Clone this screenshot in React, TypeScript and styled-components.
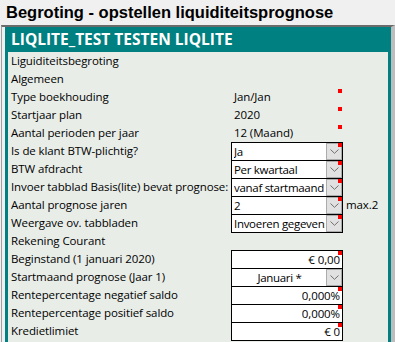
import React from 'react'
import styled, { createGlobalStyle } from 'styled-components'

const GlobalStyle = createGlobalStyle`
  html, body {
    margin: 0;
    padding: 0;
    background: #f0f0f0;
    overflow: hidden;
  }
`

const Page = styled.div`
  width: 395px;
  height: 342px;
  overflow: hidden;
  background: #f0f0f0;
`

const Title = styled.h1`
  margin: 0;
  height: 25px;
  padding-left: 6px;
  font-family: 'Liberation Sans', Arial, sans-serif;
  font-size: 16.5px;
  font-weight: bold;
  line-height: 25px;
  color: #000;
  white-space: nowrap;
`

const Frame = styled.div`
  margin-left: 1px;
  padding-left: 3px;
  border-top: 2px solid #6b6b6b;
  border-left: 1px solid #a0a0a0;
  border-right: 4px solid #bdbdbd;
  height: 320px;
`

const Sheet = styled.div`
  background: #008080;
  padding: 0 3px;
  height: 100%;
`

const SheetHeader = styled.div`
  height: 25px;
  padding-left: 3px;
  font-family: 'Open Sans', sans-serif;
  font-size: 15.5px;
  font-weight: bold;
  line-height: 25px;
  color: #fff;
  white-space: nowrap;
`

const Body = styled.div`
  background: #e8ede8;
  padding-left: 3px;
  height: 300px;
  font-family: 'Open Sans', sans-serif;
  font-size: 11.5px;
  letter-spacing: -0.1px;
  color: #000;
`

const Row = styled.div`
  display: grid;
  grid-template-columns: 220px 112px auto;
  height: 18px;
  line-height: 18px;
  white-space: nowrap;
`

const Label = styled.div`
  overflow: visible;
`

const Cell = styled.div<{ $boxed?: boolean; $align?: 'left' | 'right' | 'center' }>`
  position: relative;
  box-sizing: border-box;
  height: ${p => (p.$boxed ? '19px' : '18px')};
  line-height: 17px;
  padding: ${p => (p.$boxed ? '0 2px 0 2px' : '0 3px')};
  background: ${p => (p.$boxed ? '#fff' : 'transparent')};
  border: ${p => (p.$boxed ? '1px solid #000' : 'none')};
  text-align: ${p => p.$align || 'left'};
  overflow: hidden;
`

const SelectText = styled.div<{ $center?: boolean }>`
  margin-right: 15px;
  overflow: hidden;
  letter-spacing: -0.3px;
  text-align: ${p => (p.$center ? 'center' : 'left')};
`

const DropButton = styled.div`
  position: absolute;
  top: 0;
  right: 0;
  bottom: 0;
  width: 16px;
  box-sizing: border-box;
  background: #e1e1e1;
  border: 1px solid #acacac;
  display: flex;
  align-items: center;
  justify-content: center;
`

const Marker = styled.span<{ $plain?: boolean }>`
  position: absolute;
  top: ${p => (p.$plain ? '1px' : '0')};
  right: ${p => (p.$plain ? '1px' : '0')};
  width: 4px;
  height: 4px;
  background: #ff0000;
`

const Note = styled.div`
  padding-left: 3px;
  line-height: 17px;
`

const Chevron = () => (
  <svg width="9" height="5" viewBox="0 0 9 5">
    <path d="M0.5 0.5 L4.5 4.3 L8.5 0.5" fill="none" stroke="#707070" strokeWidth="1" />
  </svg>
)

type Value =
  | { kind: 'none' }
  | { kind: 'text'; text: string; marker?: boolean }
  | { kind: 'select'; text: string; marker?: boolean; center?: boolean }
  | { kind: 'input'; text: string; marker?: boolean }

const rows: { label: string; value: Value; note?: string }[] = [
  { label: 'Liguiditeitsbegroting', value: { kind: 'none' } },
  { label: 'Algemeen', value: { kind: 'none' } },
  { label: 'Type boekhouding', value: { kind: 'text', text: 'Jan/Jan', marker: true } },
  { label: 'Startjaar plan', value: { kind: 'text', text: '2020', marker: true } },
  { label: 'Aantal perioden per jaar', value: { kind: 'text', text: '12 (Maand)', marker: true } },
  { label: 'Is de klant BTW-plichtig?', value: { kind: 'select', text: 'Ja', marker: true } },
  { label: 'BTW afdracht', value: { kind: 'select', text: 'Per kwartaal', marker: true } },
  {
    label: 'Invoer tabblad Basis(lite) bevat prognose:',
    value: { kind: 'select', text: 'vanaf startmaand', marker: true },
  },
  { label: 'Aantal prognose jaren', value: { kind: 'select', text: '2', marker: true }, note: 'max.2' },
  { label: 'Weergave ov. tabbladen', value: { kind: 'select', text: 'Invoeren gegevens', marker: true } },
  { label: 'Rekening Courant', value: { kind: 'none' } },
  { label: 'Beginstand (1 januari 2020)', value: { kind: 'input', text: '€ 0,00', marker: true } },
  { label: 'Startmaand prognose (Jaar 1)', value: { kind: 'select', text: 'Januari *', center: true } },
  { label: 'Rentepercentage negatief saldo', value: { kind: 'input', text: '0,000%', marker: true } },
  { label: 'Rentepercentage positief saldo', value: { kind: 'input', text: '0,000%', marker: true } },
  { label: 'Kredietlimiet', value: { kind: 'input', text: '€ 0', marker: true } },
]

const ValueCell = ({ value }: { value: Value }) => {
  if (value.kind === 'none') return <div />
  if (value.kind === 'text') {
    return (
      <Cell>
        {value.text}
        {value.marker && <Marker $plain />}
      </Cell>
    )
  }
  if (value.kind === 'select') {
    return (
      <Cell $boxed>
        <SelectText $center={value.center}>{value.text}</SelectText>
        <DropButton>
          <Chevron />
        </DropButton>
        {value.marker && <Marker />}
      </Cell>
    )
  }
  return (
    <Cell $boxed $align="right">
      {value.text}
      {value.marker && <Marker />}
    </Cell>
  )
}

export default function App() {
  return (
    <Page>
      <GlobalStyle />
      <Title>Begroting - opstellen liquiditeitsprognose</Title>
      <Frame>
        <Sheet>
          <SheetHeader>LIQLITE_TEST TESTEN LIQLITE</SheetHeader>
          <Body>
            {rows.map(r => (
              <Row key={r.label}>
                <Label>{r.label}</Label>
                <ValueCell value={r.value} />
                {r.note ? <Note>{r.note}</Note> : <div />}
              </Row>
            ))}
          </Body>
        </Sheet>
      </Frame>
    </Page>
  )
}
